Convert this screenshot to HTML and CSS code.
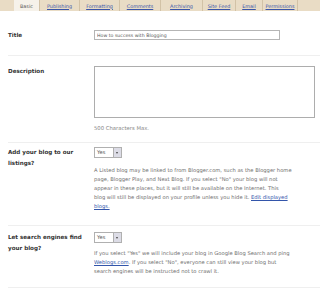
FILE: index.html
```html
<!DOCTYPE html>
<html lang="en">
<head>
    <meta charset="UTF-8">
    <title>Settings - Basic</title>
    <link rel="stylesheet" href="styles.css">
</head>
<body>
    <!-- Settings tabs -->
    <div class="tabs">
        <span class="tab active">Basic</span>
        <a class="tab" href="#">Publishing</a>
        <a class="tab" href="#">Formatting</a>
        <a class="tab" href="#">Comments</a>
        <a class="tab" href="#">Archiving</a>
        <a class="tab" href="#">Site Feed</a>
        <a class="tab" href="#">Email</a>
        <a class="tab" href="#">Permissions</a>
    </div>

    <div class="settings">
        <div class="row row-title">
            <div class="label">Title</div>
            <div class="field">
                <input type="text" class="text-input" value="How to success with Blogging">
            </div>
        </div>

        <div class="row row-desc">
            <div class="label">Description</div>
            <div class="field">
                <textarea class="desc-input"></textarea>
                <div class="hint">500 Characters Max.</div>
            </div>
        </div>

        <div class="row row-listing">
            <div class="label">Add your blog to our listings?</div>
            <div class="field">
                <div class="select"><span class="select-value">Yes</span><span class="select-arrow"></span></div>
                <p class="help">A Listed blog may be linked to from Blogger.com, such as the Blogger home page, Blogger Play, and Next Blog. If you select "No" your blog will not appear in these places, but it will still be available on the Internet. This<br>blog will still be displayed on your profile unless you hide it. <a href="#">Edit displayed blogs.</a></p>
            </div>
        </div>

        <div class="row row-search">
            <div class="label">Let search engines find your blog?</div>
            <div class="field">
                <div class="select"><span class="select-value">Yes</span><span class="select-arrow"></span></div>
                <p class="help">If you select "Yes" we will include your blog in Google Blog Search and ping <a href="#">Weblogs.com</a>. If you select "No", everyone can still view your blog but search engines will be instructed not to crawl it.</p>
            </div>
        </div>
    </div>
</body>
</html>
```

FILE: styles.css
```css
/* General */
body {
    margin: 0;
    font-family: "DejaVu Sans", Verdana, sans-serif;
    background-color: #fff;
    color: #333;
    overflow: hidden;
}

/* Tabs */
.tabs {
    display: flex;
    height: 11px;
    padding-left: 14px;
    background-color: #e9dcc5;
}

.tab {
    display: flex;
    align-items: center;
    justify-content: center;
    border-right: 1px solid #d2c2a6;
    font-size: 4.9px;
    color: #3a55a8;
    text-decoration: underline;
}

.tab:nth-child(1) { width: 25px; }
.tab:nth-child(2) { width: 39px; }
.tab:nth-child(3) { width: 39px; }
.tab:nth-child(4) { width: 40px; }
.tab:nth-child(5) { width: 41px; }
.tab:nth-child(6) { width: 32px; }
.tab:nth-child(7) { width: 26px; }
.tab:nth-child(8) { width: 34px; }

.tab.active {
    background-color: #f6f2ea;
    color: #555;
    text-decoration: none;
}

/* Rows */
.settings {
    margin-left: 8px;
}

.row {
    display: flex;
    box-sizing: border-box;
    border-bottom: 1px solid #efefef;
}

.label {
    width: 86px;
    flex-shrink: 0;
    font-size: 5.6px;
    font-weight: bold;
    line-height: 11px;
    color: #333;
}

.row-title {
    height: 45px;
    padding-top: 19px;
}

.row-desc {
    height: 87px;
    padding-top: 10px;
}

.row-listing {
    height: 83px;
    padding-top: 4px;
}

.row-listing .label,
.row-search .label {
    width: 78px;
    padding-right: 8px;
}

.row-search {
    height: 62px;
    padding-top: 6px;
}

/* Fields */
.field {
    flex: 1;
}

.text-input {
    display: block;
    width: 186px;
    height: 10px;
    margin: 0;
    padding: 0 2px;
    box-sizing: border-box;
    border: 1px solid #b5b5b5;
    font-family: "DejaVu Sans", sans-serif;
    font-size: 4.7px;
    color: #555;
}

.desc-input {
    display: block;
    width: 221px;
    height: 52px;
    margin: 0;
    padding: 0;
    box-sizing: border-box;
    border: 1px solid #adadad;
    resize: none;
}

.hint {
    margin-top: 7px;
    font-size: 5.3px;
    color: #888;
}

.select {
    display: flex;
    width: fit-content;
    height: 11px;
    border: 1px solid #b0b0b0;
    box-sizing: border-box;
    background-color: #fff;
}

.select-value {
    width: 16px;
    padding-left: 2px;
    font-size: 5.2px;
    line-height: 9px;
    color: #555;
}

.select-arrow {
    position: relative;
    width: 7px;
    background-color: #dcdce6;
    border-left: 1px solid #b0b0b0;
}

.select-arrow::after {
    content: "";
    position: absolute;
    left: 2px;
    top: 3.5px;
    border-left: 1.5px solid transparent;
    border-right: 1.5px solid transparent;
    border-top: 2px solid #444;
}

.help {
    margin: 8px 0 0;
    width: 201px;
    font-size: 5.2px;
    line-height: 9px;
    color: #6e6e6e;
}

.row-search .help { margin-top: 6px; }

.help a {
    color: #3355aa;
}
```
